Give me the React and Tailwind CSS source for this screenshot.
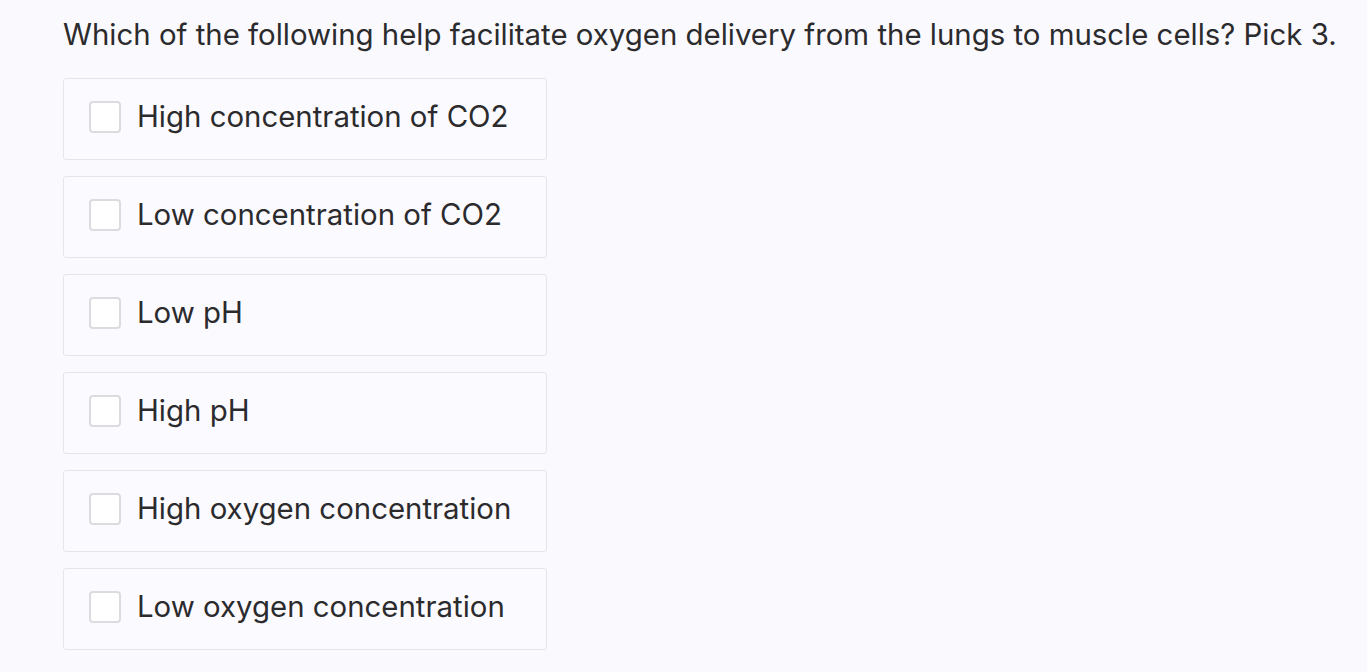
export default function App() {
  const options = [
    "High concentration of CO2",
    "Low concentration of CO2",
    "Low pH",
    "High pH",
    "High oxygen concentration",
    "Low oxygen concentration",
  ];
  return (
    <div className="min-h-[672px] w-full bg-[#faf9fd] text-[#2b2b2e]" style={{ fontFamily: "Inter, 'Liberation Sans', sans-serif" }}>
      <div className="pl-[63px] pt-[15px]">
        <h1 className="text-[29.4px] leading-[40px] font-normal whitespace-nowrap">
          Which of the following help facilitate oxygen delivery from the lungs to muscle cells? Pick 3.
        </h1>
        <div className="mt-[23px] flex w-[484px] flex-col gap-[16px]">
          {options.map((o) => (
            <label key={o} className="flex h-[82px] items-center rounded-[3px] border border-[#e6e5ec] bg-[#fbfafe] pb-[5px] pl-[25px]">
              <span className="h-[32px] w-[32px] shrink-0 rounded-[4px] border-2 border-[#dcdbe0] bg-white" />
              <span className="ml-[16px] text-[29.4px] leading-none">{o}</span>
            </label>
          ))}
        </div>
      </div>
    </div>
  );
}
